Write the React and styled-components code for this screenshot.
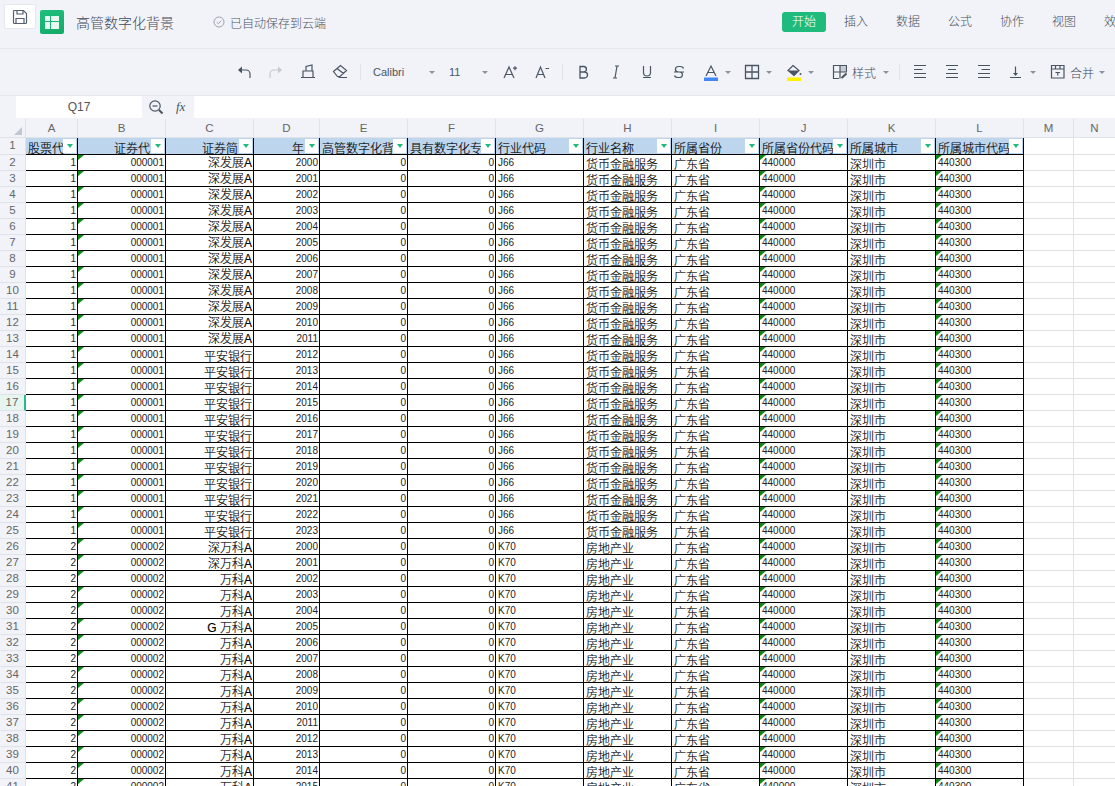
import React from 'react';
import styled, { createGlobalStyle } from 'styled-components';

const GlobalStyle = createGlobalStyle`
    html, body {
        margin: 0;
        height: 786px;
        overflow: hidden;
        background: #fff;
        font-family: "Liberation Sans", "Noto Sans CJK SC", sans-serif;
    }
`;

const Page = styled.div`
    width: 1115px;
    height: 786px;
    overflow: hidden;
    background: #f1f3f8;
`;

/* title bar */
const TopBar = styled.div`
    height: 48px;
    border-bottom: 1px solid #e2e6ee;
    display: flex;
    align-items: center;
    padding: 0 0 0 4px;
    overflow: hidden;
`;

const TopInner = styled.div`
    height: 44px;
    margin-bottom: 4px;
    display: flex;
    align-items: center;
    width: 100%;
`;

const SaveButton = styled.div`
    width: 32px;
    height: 25px;
    box-sizing: border-box;
    margin-bottom: 11px;
    background: #fff;
    border: 1px solid #e6e8ee;
    border-radius: 2px;
    display: flex;
    align-items: center;
    justify-content: center;
    color: #555f6e;
`;

const Logo = styled.div`
    width: 24px;
    height: 24px;
    margin-left: 4px;
    border-radius: 2px;
    background: linear-gradient(160deg, #1fc07f, #14a968);
    display: flex;
    align-items: center;
    justify-content: center;
`;

const Title = styled.div`
    margin-left: 12px;
    width: 137px;
    font-size: 14px;
    font-weight: 300;
    color: #3f4a58;
`;

const SavedStatus = styled.div`
    display: flex;
    align-items: center;
    gap: 5px;
    font-size: 12px;
    font-weight: 300;
    color: #4f5864;
`;

const Tabs = styled.div`
    margin-left: auto;
    display: flex;
    align-items: center;
    width: 333px;
    flex: none;
`;

const Tab = styled.div`
    flex: none;
    width: ${p => (p.$active ? '44px' : '24px')};
    height: 20px;
    margin-right: ${p => (p.$active ? '18px' : '28px')};
    border-radius: 3px;
    background: ${p => (p.$active ? '#1fbb7d' : 'transparent')};
    color: ${p => (p.$active ? '#fff' : '#454f5c')};
    font-size: 12px;
    font-weight: 300;
    line-height: 20px;
    text-align: center;
    white-space: nowrap;
`;

/* ribbon */
const Ribbon = styled.div`
    height: 46px;
    border-bottom: 1px solid #e2e6ee;
    display: flex;
    align-items: center;
    padding-left: 228px;
    color: #4a5563;
`;

const Tool = styled.div`
    flex: none;
    width: ${p => p.$w || 32}px;
    margin-left: ${p => p.$ml || 0}px;
    height: 24px;
    display: flex;
    align-items: center;
    justify-content: center;
    color: ${p => (p.$disabled ? '#c4c9d1' : 'inherit')};
`;

const RibbonDivider = styled.div`
    flex: none;
    width: 1px;
    height: 16px;
    margin-left: ${p => p.$ml || 0}px;
    background: #dfe2e8;
`;

const SelectBox = styled.div`
    flex: none;
    width: ${p => p.$w}px;
    margin-left: ${p => p.$ml}px;
    display: flex;
    justify-content: space-between;
    align-items: center;
    font-size: 11px;
    color: #4a5563;
`;

const RibbonLabel = styled.div`
    flex: none;
    width: ${p => p.$w}px;
    font-size: 12px;
    font-weight: 300;
    color: #3f4a58;
    margin-left: 1px;
`;

const Caret = styled.div`
    flex: none;
    width: 10px;
    display: flex;
    justify-content: center;
    &::before {
        content: '';
        border-left: 3.5px solid transparent;
        border-right: 3.5px solid transparent;
        border-top: 3.5px solid #8a929e;
    }
`;

/* formula bar */
const FormulaBar = styled.div`
    height: 23px;
    display: flex;
    padding-left: 16px;
`;

const NameBox = styled.div`
    width: 126px;
    height: 22px;
    background: #fff;
    color: #555;
    font-size: 12px;
    line-height: 22px;
    text-align: center;
`;

const FormulaIcons = styled.div`
    width: 52px;
    height: 22px;
    display: flex;
    align-items: center;
    padding-left: 6px;
    box-sizing: border-box;
    gap: 12px;
    color: #4a5563;
`;

const FxLabel = styled.span`
    font-family: "Liberation Serif", serif;
    font-style: italic;
    font-size: 13px;
    color: #4a5563;
`;

const FormulaInput = styled.div`
    flex: 1;
    height: 22px;
    background: #fff;
`;

/* sheet */
const columns = '26px 52px 88px 88px 66px 88px 88px 88px 88px 88px 88px 88px 88px 50px 42px';

const SheetRow = styled.div`
    display: grid;
    grid-template-columns: ${columns};
    height: ${p => p.$h}px;
    background: #fff;
`;

const Corner = styled.div`
    background: #f1f3f8;
    border-right: 1px solid #dfe2e8;
    border-bottom: 1px solid #dfe2e8;
    position: relative;
    &::after {
        content: '';
        position: absolute;
        right: 3px;
        bottom: 2px;
        border-left: 8px solid transparent;
        border-bottom: 8px solid #c3c8d0;
    }
`;

const ColumnHead = styled.div`
    background: #f1f3f8;
    border-right: 1px solid #dfe2e8;
    border-bottom: 1px solid #dfe2e8;
    color: #666;
    font-size: 11.5px;
    line-height: 18px;
    text-align: center;
`;

const RowHead = styled.div`
    background: ${p => (p.$active ? '#e7f5ef' : '#f1f3f8')};
    border-right: ${p => (p.$active ? '2px solid #2ab98a' : '1px solid #dfe2e8')};
    border-bottom: 1px solid #dfe2e8;
    box-sizing: border-box;
    color: #666;
    font-size: 11.5px;
    line-height: 15px;
    text-align: center;
`;

const Cell = styled.div`
    position: relative;
    box-sizing: border-box;
    min-width: 0;
    overflow: hidden;
    white-space: nowrap;
    border-right: 1px solid #000;
    border-bottom: 1px solid #000;
    color: #222;
    text-align: ${p => p.$align || 'right'};
    padding: 0 1px 0 2px;
    font-size: 10px;
    line-height: 16px;
`;

const CjkCell = styled(Cell)`
    color: #000;
    font-size: 12px;
    font-weight: 300;
    -webkit-text-stroke: 0.15px #000;
    line-height: 14px;
    padding-top: ${p => p.$top}px;
`;

const HeaderCell = styled(CjkCell)`
    background: #bdd6ee;
    padding-top: 4px;
    padding-right: ${p => (p.$align === 'right' ? '15px' : '0')};
`;

const EmptyCell = styled.div`
    border-right: 1px solid #dfe2e8;
    border-bottom: 1px solid #dfe2e8;
`;

const FilterButton = styled.div`
    position: absolute;
    top: 1px;
    right: 1px;
    width: 13px;
    height: 14px;
    background: #fff;
    display: flex;
    align-items: center;
    justify-content: center;
    &::before {
        content: '';
        border-left: 3.5px solid transparent;
        border-right: 3.5px solid transparent;
        border-top: 4px solid #1fbb7d;
    }
`;

const CommentMark = styled.div`
    position: absolute;
    top: 0;
    left: 0;
    border-top: 5px solid #0b8a12;
    border-right: 6px solid transparent;
`;

const Icon = ({ w = 16, h = 16, children, sw = 1.2 }) => (
    <svg width={w} height={h} viewBox={`0 0 ${w} ${h}`} fill="none" stroke="currentColor" strokeWidth={sw}>
        {children}
    </svg>
);

const COLUMN_NAMES = 'ABCDEFGHIJKLMN'.split('');

const HEADERS = [
    ['股票代', 'right'], ['证券代', 'right'], ['证券简', 'right'], ['年', 'right'],
    ['高管数字化背', 'left'], ['具有数字化专', 'left'], ['行业代码', 'left'], ['行业名称', 'left'],
    ['所属省份', 'left'], ['所属省份代码', 'left'], ['所属城市', 'left'], ['所属城市代码', 'left'],
];

const buildRows = () => {
    const rows = [];
    for (let n = 2; n <= 41; n++) {
        const first = n <= 25;
        const year = first ? 2000 + n - 2 : 2000 + n - 26;
        let name = '万科A';
        if (first) name = n <= 13 ? '深发展A' : '平安银行';
        else if (n <= 27) name = '深万科A';
        else if (n === 31) name = 'G 万科A';
        rows.push({
            n,
            id: first ? 1 : 2,
            code: first ? '000001' : '000002',
            name,
            year,
            industry: first ? 'J66' : 'K70',
            industryName: first ? '货币金融服务' : '房地产业',
            nameTop: first ? (n <= 13 ? 1 : 3) : 2,
        });
    }
    return rows;
};

const DataRow = ({ row }) => (
    <SheetRow $h={16}>
        <RowHead $active={row.n === 17}>{row.n}</RowHead>
        <Cell>{row.id}</Cell>
        <Cell><CommentMark />{row.code}</Cell>
        <CjkCell $top={row.nameTop}>{row.name}</CjkCell>
        <Cell>{row.year}</Cell>
        <Cell>0</Cell>
        <Cell>0</Cell>
        <Cell $align="left">{row.industry}</Cell>
        <CjkCell $align="left" $top={3}>{row.industryName}</CjkCell>
        <CjkCell $align="left" $top={3}>广东省</CjkCell>
        <Cell $align="left"><CommentMark />440000</Cell>
        <CjkCell $align="left" $top={3}>深圳市</CjkCell>
        <Cell $align="left"><CommentMark />440300</Cell>
        <EmptyCell />
        <EmptyCell />
    </SheetRow>
);

export default function App() {
    return (
        <Page>
            <GlobalStyle />
            <TopBar>
                <TopInner>
                    <SaveButton>
                        <Icon>
                            <path d="M1.500 2.500a1 1 0 0 1 1-1h9l3 3v9a1 1 0 0 1-1 1h-11a1 1 0 0 1-1-1z" />
                            <path d="M5 1.500v3.500h6V1.500M4 14.500V9.500h8v5" />
                        </Icon>
                    </SaveButton>
                    <Logo>
                        <svg width="14" height="13" viewBox="0 0 14 13">
                            <path d="M0 0h5v5H0zM6 0h8v5H6zM0 6h5v7H0zM6 6h8v7H6z" fill="#fff" fillOpacity="0.9" />
                        </svg>
                    </Logo>
                    <Title>高管数字化背景</Title>
                    <SavedStatus>
                        <Icon w={12} h={12} sw={1}>
                            <circle cx="6" cy="6" r="5" stroke="#9aa2ad" />
                            <path d="M3.800 6.200l1.600 1.500 2.800-3" stroke="#9aa2ad" />
                        </Icon>
                        <span>已自动保存到云端</span>
                    </SavedStatus>
                    <Tabs>
                        <Tab $active>开始</Tab>
                        <Tab>插入</Tab>
                        <Tab>数据</Tab>
                        <Tab>公式</Tab>
                        <Tab>协作</Tab>
                        <Tab>视图</Tab>
                        <Tab>效果</Tab>
                    </Tabs>
                </TopInner>
            </TopBar>

            <Ribbon>
                <Tool>
                    <Icon>
                        <path d="M6 2.500L2 6l4 3.500z" fill="currentColor" stroke="none" />
                        <path d="M5 6h5a4 4 0 0 1 4 4v4" />
                    </Icon>
                </Tool>
                <Tool $disabled>
                    <Icon>
                        <path d="M10 2.500L14 6l-4 3.500z" fill="currentColor" stroke="none" />
                        <path d="M11 6H6a4 4 0 0 0-4 4v4" />
                    </Icon>
                </Tool>
                <Tool>
                    <Icon><path d="M1 13.500h14M3 13.500V7h10v6.500M6 7V2.500L12 1v6" /></Icon>
                </Tool>
                <Tool>
                    <Icon><path d="M1.500 7.500L8.500 1.500l6 5-6.500 6H5.500zM5 4.500l6.500 5M6.500 13.500H15" /></Icon>
                </Tool>
                <RibbonDivider $ml={4} />
                <SelectBox $w={64} $ml={12}>
                    <span>Calibri</span>
                    <Caret />
                </SelectBox>
                <SelectBox $w={41} $ml={12}>
                    <span>11</span>
                    <Caret />
                </SelectBox>
                <Tool $ml={4}>
                    <Icon w={20}><path d="M4 14L9 3l5 11M5.800 10.500h6.400M13 4.200h4M15 2.200v4" /></Icon>
                </Tool>
                <Tool>
                    <Icon w={20}><path d="M4 14L8.500 3 13 14M5.500 10.500h6M13.500 4.500H17" /></Icon>
                </Tool>
                <RibbonDivider $ml={4} />
                <Tool $ml={4}>
                    <Icon sw={1.300}><path d="M5 2.500h4a3 2.800 0 0 1 0 5.500H5zM5 8h4.500a3 3 0 0 1 0 6H5z" /></Icon>
                </Tool>
                <Tool>
                    <Icon><path d="M8 2h4M6 14h4M10 2L8 14" /></Icon>
                </Tool>
                <Tool>
                    <Icon><path d="M4.500 2v6.500a3.500 3.500 0 0 0 7 0V2M4 13.500h8" /></Icon>
                </Tool>
                <Tool>
                    <Icon><path d="M12.500 4.500A3.500 2.500 0 0 0 9 2.500H7.500a3 2.700 0 0 0 0 5.500h1.500a3 2.800 0 0 1 0 5.500H7a3.500 2.500 0 0 1-3.500-2M3 8h10" /></Icon>
                </Tool>
                <Tool $w={24} $ml={4}>
                    <svg width="16" height="18" viewBox="0 0 16 18" fill="none">
                        <path d="M3 13L8 3l5 10M4.700 9.500h6.600" stroke="#4a5563" strokeWidth="1.200" />
                        <rect x="1" y="14.500" width="14" height="3.500" fill="#4285f4" />
                    </svg>
                </Tool>
                <Caret />
                <Tool $w={24} $ml={7}>
                    <Icon sw={1.300}><path d="M1.500 1.500h13v13h-13zM8 1.500v13M1.500 8h13" /></Icon>
                </Tool>
                <Caret />
                <Tool $w={24} $ml={8}>
                    <svg width="16" height="18" viewBox="0 0 16 18" fill="none">
                        <path d="M7 2.500l6 5-5 5-6-5z" stroke="#4a5563" strokeWidth="1.200" />
                        <path d="M2 7.500l6 5 5-5z" fill="#4a5563" />
                        <circle cx="14.500" cy="11" r="1" fill="#4a5563" />
                        <rect x="1" y="14.500" width="14" height="3.500" fill="#fff200" />
                    </svg>
                </Tool>
                <Caret />
                <Tool $w={24} $ml={11}>
                    <Icon>
                        <rect x="9" y="2" width="6" height="6" fill="#c8ccd4" stroke="none" />
                        <path d="M8 14.500H2.500v-13h13v7M2.500 8h13M9 1.500v13" />
                        <path d="M10.500 14l5-4.500" strokeWidth="2" />
                    </Icon>
                </Tool>
                <RibbonLabel $w={29}>样式</RibbonLabel>
                <Caret />
                <RibbonDivider $ml={8} />
                <Tool $ml={4}>
                    <Icon><path d="M2 1.500h12M2 5.500h8.500M2 9.500h12M2 13.500h12" /></Icon>
                </Tool>
                <Tool>
                    <Icon><path d="M2 1.500h12M4 5.500h8M2 9.500h12M2 13.500h12" /></Icon>
                </Tool>
                <Tool>
                    <Icon><path d="M2 1.500h12M5.500 5.500H14M2 9.500h12M2 13.500h12" /></Icon>
                </Tool>
                <Tool $w={24} $ml={4}>
                    <Icon>
                        <path d="M2 13.500h11M7.500 2.500v8" />
                        <path d="M5 9h5l-2.500 3z" fill="currentColor" stroke="none" />
                    </Icon>
                </Tool>
                <Caret />
                <Tool $w={24} $ml={7}>
                    <Icon><path d="M2.500 1.500H15V14H2.500zM2.500 5H15M6.500 1.500V5M11 1.500V5M6.500 8.500H11M8.750 8.500v3" /></Icon>
                </Tool>
                <RibbonLabel $w={27}>合并</RibbonLabel>
                <Caret />
            </Ribbon>

            <FormulaBar>
                <NameBox>Q17</NameBox>
                <FormulaIcons>
                    <Icon>
                        <circle cx="7" cy="7" r="5.200" />
                        <path d="M4.500 7h5" />
                        <path d="M11 11l3.500 3.500" strokeWidth="2" />
                    </Icon>
                    <FxLabel>fx</FxLabel>
                </FormulaIcons>
                <FormulaInput />
            </FormulaBar>

            <SheetRow $h={19}>
                <Corner />
                {COLUMN_NAMES.map(name => <ColumnHead key={name}>{name}</ColumnHead>)}
            </SheetRow>
            <SheetRow $h={17}>
                <RowHead>1</RowHead>
                {HEADERS.map(([label, align]) => (
                    <HeaderCell key={label} $align={align}>
                        {label}
                        <FilterButton />
                    </HeaderCell>
                ))}
                <EmptyCell />
                <EmptyCell />
            </SheetRow>
            {buildRows().map(row => <DataRow key={row.n} row={row} />)}
        </Page>
    );
}
